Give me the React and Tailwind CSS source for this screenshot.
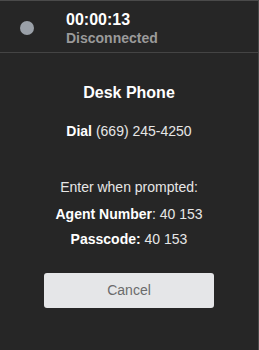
import React from 'react';

export default function App() {
  return (
    <div className="w-[259px] h-[350px] bg-[#262626] border-r border-t border-[#4a4a4a] text-white font-['Liberation_Sans',Arial,sans-serif] flex flex-col">
      <div className="h-[52px] flex items-center border-b border-[#444] shrink-0">
        <div className="w-[14px] h-[14px] rounded-full bg-[#9aa0a8] ml-[20px] mt-[2px]" />
        <div className="ml-[32px] flex flex-col mt-[4px]">
          <span className="text-[16px] font-bold leading-[18px]">00:00:13</span>
          <span className="text-[14px] font-bold leading-[18px] text-[#9a9a9a]">Disconnected</span>
        </div>
      </div>
      <div className="flex flex-col items-center text-[14px] text-[#e6e6e6]">
        <h2 className="mt-[31px] text-[16px] font-bold text-white leading-[18px]">Desk Phone</h2>
        <p className="mt-[21px] leading-[16px]"><span className="font-bold text-white">Dial</span> (669) 245-4250</p>
        <p className="mt-[40px] leading-[16px]">Enter when prompted:</p>
        <p className="mt-[11px] leading-[16px]"><span className="font-bold text-white">Agent Number</span>: 40 153</p>
        <p className="mt-[9px] leading-[16px]"><span className="font-bold text-white">Passcode:</span> 40 153</p>
        <button className="mt-[26px] w-[170px] h-[35px] rounded-[3px] bg-[#e5e6e8] text-[#6b6b6b] text-[14px]">Cancel</button>
      </div>
    </div>
  );
}
